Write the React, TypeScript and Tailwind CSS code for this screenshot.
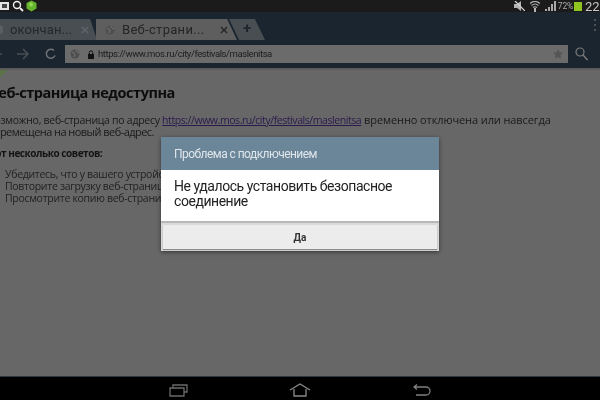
import React from "react";

function Close({ className }: { className: string }) {
  return (
    <svg width="8" height="8" viewBox="0 0 9 9" className={className}>
      <path d="M1 1l7 7M8 1l-7 7" stroke="currentColor" strokeWidth="1.6" />
    </svg>
  );
}

function Globe() {
  return (
    <svg width="10" height="10" viewBox="0 0 10 10" className="shrink-0">
      <circle cx="5" cy="5" r="4.5" fill="#4f4f4f" />
      <path d="M2 3l2 1 1 2-1 2M6 1l1 2 2 1" stroke="#767676" strokeWidth="1" fill="none" />
    </svg>
  );
}

export default function App() {
  return (
    <div className="relative flex h-[400px] w-[600px] flex-col overflow-hidden bg-black font-['Roboto',sans-serif] blur-[0.35px]">
      {/* status bar */}
      <div className="flex h-3 shrink-0 items-center bg-[#1b1b1b]">
        <div className="flex items-center gap-[2px]">
          <svg width="10" height="10" viewBox="0 0 10 10">
            <rect x="-1" y="1" width="10" height="8" fill="#e4e4e4" />
            <rect x="2" y="3" width="5" height="4" fill="#444" />
          </svg>
          <svg width="12" height="12" viewBox="0 0 12 12">
            <circle cx="5" cy="5" r="3.5" stroke="#f2f2f2" strokeWidth="1.4" fill="none" />
            <path d="M8 8l3 3" stroke="#f2f2f2" strokeWidth="1.8" />
          </svg>
          <svg width="11" height="12" viewBox="0 0 11 12">
            <path d="M5.500 0.500l5 2.500v5.500l-5 3-5-3V3z" fill="#66b32e" />
            <circle cx="5" cy="4.500" r="2" fill="#93d84f" />
          </svg>
        </div>
        <div className="ml-auto flex items-center">
          <svg width="11" height="10" viewBox="0 0 11 10" className="mr-[5px]">
            <path d="M0 3h3l4-3v10l-4-3H0z" fill="#b5b5b5" />
            <path d="M1 0l10 10" stroke="#d8d8d8" strokeWidth="1.2" />
          </svg>
          <svg width="10" height="11" viewBox="0 0 10 11" className="mr-[5px]">
            <path d="M0 2.500q5-4 10 0M1.500 4.500q3.500-3 7 0M3 6.500q2-1.500 4 0" stroke="#b5b5b5" strokeWidth="1.2" fill="none" />
            <path d="M4 7h2v4H4z" fill="#b5b5b5" />
          </svg>
          <svg width="11" height="10" viewBox="0 0 11 10" className="mr-[2px]">
            <path d="M0 8h2v2H0zM3 6h2v4H3zM6 3h2v7H6zM9 0h2v10H9z" fill="#a8a8a8" />
          </svg>
          <span className="mr-[1px] text-[8.500px] leading-none tracking-[-0.2px] text-[#a9a9a9]">72%</span>
          <div className="mr-[3px] h-[9px] w-2 bg-[#8fc31f]" />
          <span className="w-[15px] overflow-hidden whitespace-nowrap text-[13px] leading-none text-[#c6c6c6]">22:41</span>
        </div>
      </div>

      {/* tab strip */}
      <div className="flex h-[28px] shrink-0 items-end bg-[#1a2530] pr-1">
        <div className="flex h-[21px] w-[97px] items-center bg-[#484e52] text-[#22282c] [clip-path:polygon(0_0,93%_0,100%_100%,0_100%)]">
          <div className="ml-[-4px] h-[9px] w-[7px] rounded-full bg-[#5a5f63]" />
          <span className="ml-[7px] w-[60px] whitespace-nowrap text-[13px] tracking-[0.1px]">окончан...</span>
          <Close className="ml-[11px] text-[#5f666b]" />
        </div>
        <div className="ml-[-1px] flex h-[21px] w-[141px] items-center bg-[#5e5e5e] pl-[9px] text-[#252525] [clip-path:polygon(0_0,93%_0,100%_100%,0_100%)]">
          <Globe />
          <span className="ml-[7px] whitespace-nowrap text-[13px] tracking-[0.3px]">Веб-страни...</span>
          <Close className="ml-[16px] text-[#262626]" />
        </div>
        <div className="ml-[-8px] flex h-[21px] w-[36px] items-center justify-center bg-[#484e52] pb-[3px] text-[15px] font-bold text-[#1e252b] [clip-path:polygon(0_0,72%_0,100%_100%,28%_100%)]">
          +
        </div>
        <div className="ml-auto mb-[3px] flex h-[14px] flex-col justify-between self-center py-[1px]">
          <div className="h-[2px] w-[2px] bg-[#4c5052]" />
          <div className="h-[2px] w-[2px] bg-[#4c5052]" />
          <div className="h-[2px] w-[2px] bg-[#4c5052]" />
        </div>
      </div>

      {/* toolbar */}
      <div className="flex h-[28px] shrink-0 items-center bg-[#1a2530]">
        <svg width="60" height="14" viewBox="0 0 60 14" className="shrink-0">
          <path d="M0 7h2" stroke="#4a4f52" strokeWidth="1.5" />
          <path d="M17 7h11M23 2l5 5-5 5" stroke="#4a4f52" strokeWidth="1.5" fill="none" />
          <path d="M54 3.500a4.500 4.500 0 1 0 1 5" stroke="#6f7375" strokeWidth="1.5" fill="none" />
        </svg>
        <div className="ml-[5px] flex h-[18px] w-[503px] items-center bg-[#6b6b6b] pl-[5px] pr-[5px]">
          <Globe />
          <svg width="8" height="9" viewBox="0 0 8 9" className="ml-[7px] shrink-0">
            <rect x="1" y="4" width="6" height="5" fill="#111" />
            <path d="M2.300 4V2.500a1.700 1.700 0 0 1 3.400 0V4" stroke="#111" fill="none" />
          </svg>
          <span className="ml-[3px] text-[9.500px] tracking-[-0.42px] text-[#1d1d1d]">https://www.mos.ru/city/festivals/maslenitsa</span>
          <svg width="10" height="10" viewBox="0 0 10 10" className="ml-auto">
            <path d="M5 0l1.500 3.300 3.500.4-2.600 2.400.7 3.600L5 8 1.900 9.700l.7-3.600L0 3.700l3.500-.4z" fill="#555" />
          </svg>
        </div>
        <svg width="13" height="14" viewBox="0 0 13 14" className="ml-[7px]">
          <circle cx="5" cy="5" r="4" stroke="#7b7b7b" strokeWidth="1.200" fill="none" />
          <path d="M8 8l4.500 5" stroke="#7b7b7b" strokeWidth="1.400" />
        </svg>
      </div>

      {/* page behind the dialog */}
      <div className="relative h-[308px] shrink-0 overflow-hidden border-t-2 border-[#5a5a5a] bg-[#676767] text-[#111] font-['Open_Sans',sans-serif]">
        <div className="ml-[-11px] flex flex-col pt-[13px]">
          <h1 className="text-[14.500px] font-bold leading-[20px] tracking-[-0.45px] text-[#0c0c0c]">Веб-страница недоступна</h1>
          <p className="ml-[-1px] mt-[11px] w-[600px] text-[11px] leading-[12px] text-[#1a1a1a]">
            <span className="text-[10.500px] tracking-[-0.28px]">Возможно, веб-страница по адресу </span>
            <span className="text-[10.500px] tracking-[-0.43px] text-[#2b1a4d] underline">https://www.mos.ru/city/festivals/maslenitsa</span>{" "}
            <span className="tracking-[-0.1px]">временно отключена или навсегда</span>
            <br />
            <span className="tracking-[-0.55px]">перемещена на новый веб-адрес.</span>
          </p>
          <p className="mt-[9px] text-[10px] font-bold leading-[12px] tracking-[-0.45px] text-[#141414]">Вот несколько советов:</p>
          <ul className="ml-[16px] mt-[9px] text-[10.500px] leading-[12px] tracking-[-0.3px] text-[#222]">
            <li>Убедитесь, что у вашего устройства</li>
            <li>Повторите загрузку веб-страницы</li>
            <li>Просмотрите копию веб-страницы</li>
          </ul>
        </div>
        <svg width="12" height="8" viewBox="0 0 12 8" className="absolute left-0 top-0">
          <path d="M0 0h8L2 6 0 7z" fill="#5c7349" />
        </svg>
      </div>

      {/* nav bar */}
      <div className="flex flex-1 items-center justify-center border-t border-[#2b3a40] bg-black">
        <svg width="20" height="14" viewBox="0 0 20 14" className="mt-[3px]">
          <path d="M1 5h14v8H1zM4 5V2h14v7h-3" stroke="#6a6a6a" strokeWidth="1.300" fill="none" />
        </svg>
        <svg width="22" height="14" viewBox="0 0 22 14" className="ml-[100px] mt-[3px]">
          <path d="M1 7l10-6 10 6M5 6v7h12V6" stroke="#8a8a8a" strokeWidth="1.300" fill="none" />
        </svg>
        <svg width="18" height="12" viewBox="0 0 18 12" className="ml-[102px] mt-[3px]">
          <path d="M1 3h12a3.500 3.500 0 0 1 0 8H3M4 0.500L1 3l3 2.500" stroke="#808080" strokeWidth="1.300" fill="none" />
        </svg>
      </div>

      {/* dialog */}
      <div className="absolute left-[161px] top-[137px] flex w-[278px] flex-col shadow-[0_1px_4px_rgba(0,0,0,0.5)]">
        <div className="flex h-[33px] items-center bg-[#6b8599] pl-[13px] text-[12px] tracking-[-0.55px] text-[#dfe6eb]">
          Проблема с подключением
        </div>
        <div className="h-[51px] bg-white px-[13px] pt-[9px] text-[14px] leading-[15px] tracking-[-0.45px] text-[#222]">
          Не удалось установить безопасное соединение
        </div>
        <div className="h-[30px] border-t-2 border-[#b8b8b8] bg-[#d9d9d9] px-[2px] pb-[2px] pt-[2px]">
          <div className="flex h-[24px] items-center justify-center bg-[#ececec] text-[10px] font-bold text-[#333] shadow-[0_1px_1px_rgba(0,0,0,0.35)]">
            Да
          </div>
        </div>
      </div>
    </div>
  );
}
